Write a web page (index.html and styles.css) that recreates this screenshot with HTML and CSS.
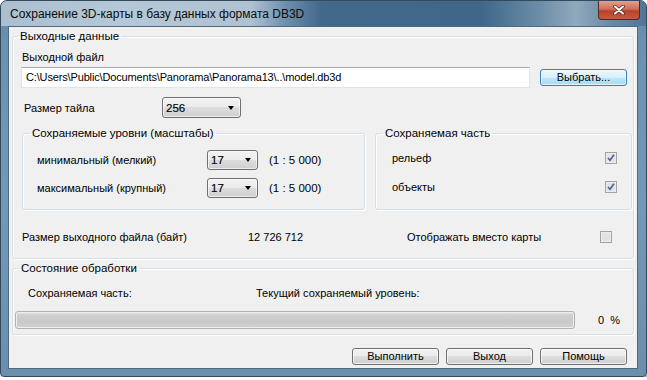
FILE: index.html
```html
<!DOCTYPE html>
<html lang="ru">
<head>
    <meta charset="UTF-8">
    <title>Сохранение 3D-карты в базу данных формата DB3D</title>
    <link rel="stylesheet" href="styles.css">
</head>
<body>

<div class="window">
    <div class="titlebar">
        <span class="title">Сохранение 3D-карты в базу данных формата DB3D</span>
        <div class="close">
            <svg width="14" height="10" viewBox="0 0 14 10">
                <path d="M3 1.5 L11 8.5 M11 1.5 L3 8.5" stroke="#5a2a22" stroke-width="3.6" stroke-linecap="round"/>
                <path d="M3 1.5 L11 8.5 M11 1.5 L3 8.5" stroke="#fff" stroke-width="2" stroke-linecap="round"/>
            </svg>
        </div>
    </div>

    <div class="client">
        <fieldset class="group main-group">
            <legend>Выходные данные</legend>

            <div class="file-label">Выходной файл</div>
            <div class="file-row">
                <div class="edit">C:\Users\Public\Documents\Panorama\Panorama13\..\model.db3d</div>
                <div class="btn btn-default">Выбрать...</div>
            </div>

            <div class="tile-row">
                <span class="tile-label">Размер тайла</span>
                <div class="combo combo-tile"><span>256</span><i class="arrow"></i></div>
            </div>

            <div class="sub-row">
                <fieldset class="group sub levels">
                    <legend>Сохраняемые уровни (масштабы)</legend>
                    <div class="level-row first">
                        <span class="level-label">минимальный (мелкий)</span>
                        <div class="combo combo-level"><span>17</span><i class="arrow"></i></div>
                        <span class="scale">(1 : 5 000)</span>
                    </div>
                    <div class="level-row">
                        <span class="level-label">максимальный (крупный)</span>
                        <div class="combo combo-level"><span>17</span><i class="arrow"></i></div>
                        <span class="scale">(1 : 5 000)</span>
                    </div>
                </fieldset>

                <fieldset class="group sub parts">
                    <legend>Сохраняемая часть</legend>
                    <div class="part-row first">
                        <span>рельеф</span>
                        <svg class="check" width="12" height="12" viewBox="0 0 12 12">
                            <rect x="0.5" y="0.5" width="11" height="11" fill="#f4f4f4" stroke="#a3a3a3"/>
                            <rect x="1.5" y="1.5" width="9" height="9" fill="#e2e2e2"/>
                            <path d="M3 6 L5 8.3 L9 2.8" fill="none" stroke="#4b5f9a" stroke-width="1.6"/>
                        </svg>
                    </div>
                    <div class="part-row">
                        <span>объекты</span>
                        <svg class="check" width="12" height="12" viewBox="0 0 12 12">
                            <rect x="0.5" y="0.5" width="11" height="11" fill="#f4f4f4" stroke="#a3a3a3"/>
                            <rect x="1.5" y="1.5" width="9" height="9" fill="#e2e2e2"/>
                            <path d="M3 6 L5 8.3 L9 2.8" fill="none" stroke="#4b5f9a" stroke-width="1.6"/>
                        </svg>
                    </div>
                </fieldset>
            </div>

            <div class="size-row">
                <span class="size-label">Размер выходного файла (байт)</span>
                <span class="size-value">12 726 712</span>
                <span class="show-label">Отображать вместо карты</span>
                <svg class="check" width="12" height="12" viewBox="0 0 12 12">
                    <rect x="0.5" y="0.5" width="11" height="11" fill="#f4f4f4" stroke="#a3a3a3"/>
                    <rect x="1.5" y="1.5" width="9" height="9" fill="#e2e2e2"/>
                </svg>
            </div>
        </fieldset>

        <fieldset class="group status-group">
            <legend>Состояние обработки</legend>
            <div class="status-row">
                <span class="status-part">Сохраняемая часть:</span>
                <span>Текущий сохраняемый уровень:</span>
            </div>
            <div class="progress-row">
                <div class="progress"></div>
                <span class="percent">0 &nbsp;%</span>
            </div>
        </fieldset>

        <div class="buttons">
            <div class="btn">Выполнить</div>
            <div class="btn">Выход</div>
            <div class="btn">Помощь</div>
        </div>
    </div>
</div>

</body>
</html>
```

FILE: styles.css
```css
body {
    margin: 0;
    background-color: #ffffff;
    font-family: "Liberation Sans", Arial, sans-serif;
    font-size: 11px;
    color: #000;
}
.window {
    width: 645px;
    height: 375px;
    border: 1px solid #34495c;
    border-radius: 7px 7px 4px 4px;
    background: linear-gradient(to bottom, #5f87a8 0, #6b91b1 40px, #7399b8 200px, #6a8fad 100%);
    box-shadow: 1px 2px 2px rgba(0, 0, 0, 0.35);
}
.titlebar {
    height: 25px;
    display: flex;
    border-radius: 6px 6px 0 0;
    background: linear-gradient(to right, #aabfd0 0, #b5c8d7 120px, #aec2d2 250px, #6c8fab 285px, #43698a 320px, #3e6789 480px, #6e8ea8 540px, #90a9bd 575px, #6a8aa5 610px, #4f7697 645px);
}
.title {
    padding: 6px 0 0 9px;
    font-size: 12px;
    color: #0b0b0b;
}
.close {
    margin-left: auto;
    margin-right: 6px;
    width: 40px;
    height: 18px;
    border: 1px solid #4f2a26;
    border-top: none;
    border-radius: 0 0 4px 4px;
    background: linear-gradient(to bottom, #e3a08f 0, #cf6e58 45%, #b8412b 55%, #c85a3e 100%);
    display: flex;
    align-items: center;
    justify-content: center;
}
.client {
    margin: 0 8px 0 7px;
    height: 341px;
    border: 1px solid #4d6a82;
    background-color: #f0f0f0;
    display: flex;
    flex-direction: column;
}
.group {
    border: 1px solid #d5dfe5;
    border-radius: 3px;
    box-shadow: inset 1px 1px 0 #fff, 1px 1px 0 #fff;
    padding: 0;
    margin: 0;
    min-width: 0;
}
.group legend {
    padding: 0 2px;
    line-height: 14px;
    font-size: 11.5px;
}
.main-group {
    margin: 2px 3px 0 3px;
    padding-bottom: 12px;
}
.main-group > legend {
    margin-left: 5px;
}
.file-label {
    margin: 7px 0 0 9px;
    line-height: 14px;
}
.file-row {
    display: flex;
    align-items: center;
    margin: 3px 0 0 8px;
}
.edit {
    width: 503px;
    height: 19px;
    line-height: 19px;
    padding-left: 4px;
    background-color: #fff;
    border: 1px solid #dfe5ea;
    border-top-color: #abadb3;
    white-space: nowrap;
    overflow: hidden;
    letter-spacing: -0.15px;
}
.btn {
    box-sizing: border-box;
    width: 87px;
    height: 17px;
    line-height: 15px;
    text-align: center;
    border: 1px solid #707070;
    border-radius: 3px;
    background: linear-gradient(to bottom, #f2f2f2 0, #ebebeb 50%, #dddddd 50%, #cfcfcf 100%);
    box-shadow: inset 0 0 0 1px rgba(255, 255, 255, 0.7);
}
.btn-default {
    margin-left: 10px;
    border-color: #3c7fb1;
    background: linear-gradient(to bottom, #eaf6fd 0, #d9f0fc 50%, #bee6fd 50%, #a7d9f5 100%);
}
.tile-row {
    display: flex;
    align-items: center;
    margin: 9px 0 0 11px;
}
.tile-label {
    width: 138px;
}
.combo {
    box-sizing: border-box;
    height: 21px;
    display: flex;
    align-items: center;
    padding: 0 6px 0 3px;
    border: 1px solid #707070;
    border-radius: 3px;
    background: linear-gradient(to bottom, #f2f2f2 0, #ebebeb 50%, #dddddd 50%, #cfcfcf 100%);
    box-shadow: inset 0 0 0 1px rgba(255, 255, 255, 0.6);
}
.combo span {
    flex: 1;
    font-size: 11.5px;
    -webkit-text-stroke: 0.15px #000;
}
.combo-tile {
    width: 79px;
}
.combo-level {
    width: 51px;
    height: 20px;
}
.arrow {
    width: 0;
    height: 0;
    border-left: 3.5px solid transparent;
    border-right: 3.5px solid transparent;
    border-top: 4px solid #000;
}
.sub-row {
    display: flex;
    margin: 8px 0 0 9px;
}
.sub > legend {
    margin-left: 7px;
}
.levels {
    width: 341px;
    padding-bottom: 11px;
}
.parts {
    width: 255px;
    margin-left: 10px;
    padding-bottom: 11px;
}
.level-row {
    display: flex;
    align-items: center;
    margin: 8px 0 0 14px;
}
.level-row.first {
    margin-top: 10px;
}
.level-label {
    width: 170px;
}
.scale {
    margin-left: 11px;
    font-size: 11.5px;
}
.part-row {
    display: flex;
    align-items: center;
    justify-content: space-between;
    height: 20px;
    margin: 9px 14px 0 16px;
}
.part-row.first {
    margin-top: 8px;
}
.size-row {
    display: flex;
    align-items: center;
    height: 18px;
    margin: 18px 0 0 9px;
}
.size-label {
    width: 226px;
}
.size-value {
    width: 159px;
}
.show-label {
    width: 193px;
}
.status-group {
    margin: 2px 3px 0 3px;
    padding-bottom: 5px;
}
.status-group > legend {
    margin-left: 6px;
}
.status-row {
    display: flex;
    margin: 11px 0 0 15px;
    line-height: 14px;
}
.status-part {
    width: 228px;
}
.progress-row {
    display: flex;
    align-items: center;
    margin: 11px 0 0 2px;
}
.progress {
    box-sizing: border-box;
    width: 560px;
    height: 18px;
    border: 1px solid #b2b2b2;
    border-radius: 3px;
    background: linear-gradient(to bottom, #e6e6e6 0, #d0d0d0 20%, #c9c9c9 60%, #d2d2d2 100%);
    box-shadow: inset 0 0 0 1px #eeeeee;
}
.percent {
    margin-left: 23px;
    white-space: nowrap;
}
.buttons {
    display: flex;
    justify-content: flex-end;
    gap: 7px;
    margin: 13px 10px 0 0;
}
```
